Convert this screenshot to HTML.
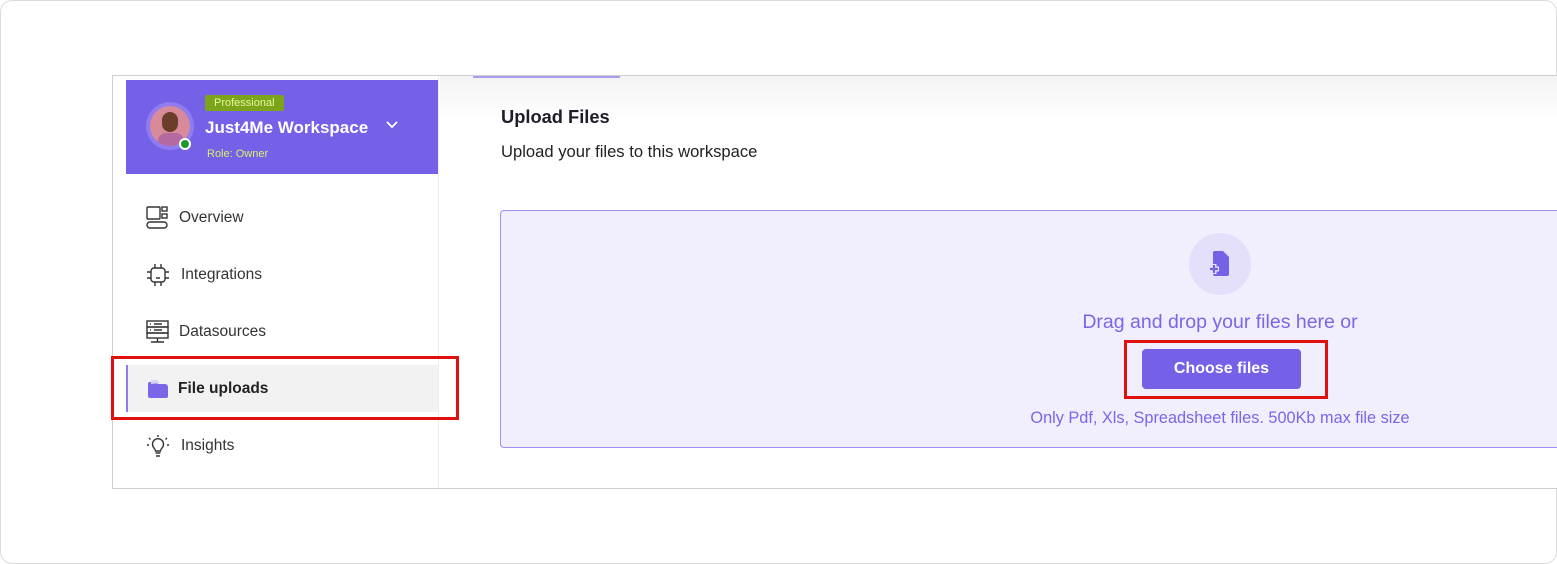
<!DOCTYPE html>
<html><head><style>
*{margin:0;padding:0;box-sizing:border-box}
body{width:1557px;height:564px;background:#fff;font-family:"Liberation Sans",sans-serif;position:relative;overflow:hidden}
.outer{position:absolute;left:0;top:0;width:1557px;height:564px;border:1px solid #dcdcdc;border-radius:12px}
.frame{position:absolute;left:112px;top:75px;width:1450px;height:414px;border:1px solid #cfcfcf;border-right:none;overflow:hidden;background:#fff}
.side{position:absolute;left:13px;top:0;width:313px;height:414px;border-right:1px solid #ececec}
.hdr{position:absolute;left:0;top:4px;width:312px;height:94px;background:#7560e8}
.abs{position:absolute}
.item{position:absolute;left:20px;font-size:15.5px;color:#333;display:flex;align-items:center}
.main{position:absolute;left:327px;top:0;right:0;height:414px;background:linear-gradient(#f3f3f3,#fff 45px)}
</style></head><body>
<div class="outer"></div>
<div class="frame">
 <div class="side">
  <div class="hdr">
   <div class="abs" style="left:20px;top:22px;width:48px;height:48px;border-radius:50%;background:#8f7cf0"></div>
   <div class="abs" style="left:24px;top:26px;width:40px;height:40px;border-radius:50%;background:#d98a9a;overflow:hidden">
     <div class="abs" style="left:12px;top:6px;width:16px;height:20px;border-radius:8px;background:#6b3e2a"></div>
     <div class="abs" style="left:8px;top:27px;width:26px;height:16px;border-radius:10px;background:#b46aa0"></div>
   </div>
   <div class="abs" style="left:53px;top:58px;width:12px;height:12px;border-radius:50%;background:#1a9a2a;border:2px solid #fff"></div>
   <div class="abs" style="left:79px;top:15px;background:#7ba41a;color:#e6f7a0;font-size:11px;padding:2px 9px;border-radius:2px">Professional</div>
   <div class="abs" style="left:79px;top:38px;color:#fff;font-size:17px;font-weight:bold">Just4Me Workspace</div>
   <svg class="abs" style="left:259px;top:40px" width="14" height="10"><path d="M2 2l5 5 5-5" stroke="#fff" stroke-width="1.8" fill="none"/></svg>
   <div class="abs" style="left:81px;top:68px;color:#d6f06a;font-size:11px">Role: Owner</div>
  </div>
  <div class="item" style="top:130px"><svg width="24" height="24"><g fill="none" stroke="#333" stroke-width="1.4"><rect x="1" y="1" width="13" height="12" rx="1"/><rect x="16" y="1" width="5" height="4"/><rect x="16" y="8" width="5" height="4"/><rect x="1" y="16" width="20" height="6" rx="3"/></g></svg><span style="margin-left:9px">Overview</span></div>
  <div class="item" style="top:187px"><svg width="24" height="24"><g fill="none" stroke="#333" stroke-width="1.4"><rect x="5" y="5" width="14" height="14" rx="3"/><path d="M9 1v4M15 1v4M9 19v4M15 19v4M1 9h4M1 15h4M19 9h4M19 15h4M10 15h4"/></g></svg><span style="margin-left:11px">Integrations</span></div>
  <div class="item" style="top:244px"><svg width="24" height="24"><g fill="none" stroke="#333" stroke-width="1.4"><rect x="1" y="1" width="21" height="6"/><rect x="1" y="7" width="21" height="6"/><rect x="1" y="13" width="21" height="5"/><path d="M11.5 18v4M5 22h13M4 4h1M8 4h8M4 10h1M8 10h8"/></g></svg><span style="margin-left:9px">Datasources</span></div>
  <div class="abs" style="left:0;top:289px;width:312px;height:47px;background:#f2f2f2;border-left:2px solid #8f7cf0"></div>
  <div class="item" style="top:301px"><svg width="24" height="24"><path d="M2 7a2 2 0 0 1 2-2h6l2 2h7a3 3 0 0 1 3 3v9a2 2 0 0 1-2 2H4a2 2 0 0 1-2-2z" fill="#7b66e8"/><path d="M5 7V3h6l3 3" fill="#d9d2fb"/></svg><span style="margin-left:8px;font-weight:bold;color:#222">File uploads</span></div>
  <div class="item" style="top:358px"><svg width="24" height="24"><g fill="none" stroke="#333" stroke-width="1.4"><path d="M8 14a5.5 5.5 0 1 1 8 0c-1 1-1.5 2-1.5 3h-5c0-1-.5-2-1.5-3z"/><path d="M9.5 19h5M10 22h4M12 1v2M3 4l1.5 1.5M21 4l-1.5 1.5M1 11h2M21 11h2"/></g></svg><span style="margin-left:11px">Insights</span></div>
 </div>
 <div class="main">
  <div class="abs" style="left:33px;top:0;width:147px;height:2px;background:#a89cf0"></div>
  <div class="abs" style="left:61px;top:30px;font-size:18.3px;font-weight:bold;color:#1e1e2a">Upload Files</div>
  <div class="abs" style="left:61px;top:66px;font-size:16.6px;color:#222">Upload your files to this workspace</div>
  <div class="abs" style="left:60px;top:134px;width:1070px;height:238px;background:#f1effd;border:1px solid #a08ff0;border-radius:4px"></div>
  <div class="abs" style="left:749px;top:157px;width:62px;height:62px;border-radius:50%;background:#e4e0fc"></div>
  <svg class="abs" style="left:767px;top:174px" width="26" height="28"><path d="M8 1h8l6 6v17a2 2 0 0 1-2 2H8a2 2 0 0 1-2-2V3a2 2 0 0 1 2-2z" fill="#7560e8"/><path d="M7 14v10M2 19h10" stroke="#e4e0fc" stroke-width="5"/><path d="M7 15v8M3 19h8" stroke="#7560e8" stroke-width="2.2"/></svg>
  <div class="abs" style="left:530px;width:500px;top:235px;text-align:center;font-size:19.5px;color:#7a66e8">Drag and drop your files here or</div>
  <div class="abs" style="left:684px;top:264px;width:204px;height:59px;border:3px solid #e01010"></div>
  <div class="abs" style="left:702px;top:273px;width:159px;height:40px;background:#7560e8;border-radius:4px;color:#fff;font-weight:bold;font-size:16px;text-align:center;line-height:40px">Choose files</div>
  <div class="abs" style="left:480px;width:600px;top:333px;text-align:center;font-size:16.3px;color:#7a66e8">Only Pdf, Xls, Spreadsheet files. 500Kb max file size</div>
 </div>
</div>
<div class="abs" style="left:111px;top:356px;width:348px;height:64px;border:3px solid #e01010"></div>
</body></html>
